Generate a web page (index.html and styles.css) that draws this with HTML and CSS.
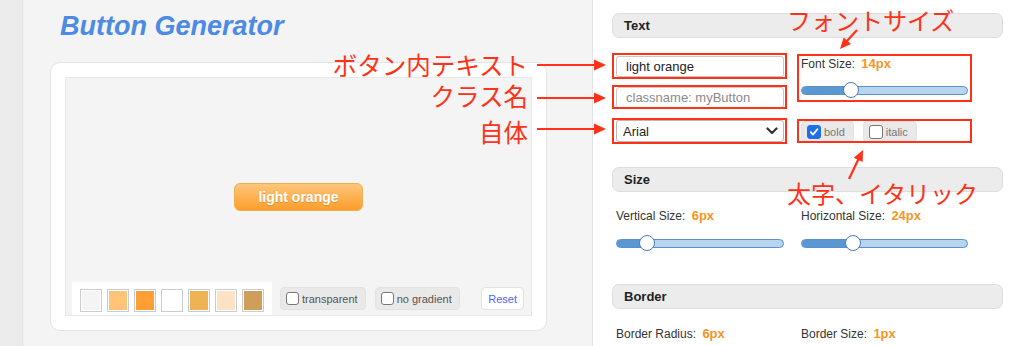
FILE: index.html
```html
<!DOCTYPE html>
<html lang="ja">
<head>
    <meta charset="UTF-8">
    <title>Button Generator</title>
    <link rel="stylesheet" href="styles.css">
</head>
<body>
    <div class="rail"></div>

    <div class="main">
        <h1 class="title">Button Generator</h1>

        <div class="card">
            <div class="canvas">
                <div class="stage">
                    <a class="preview-btn">light orange</a>
                </div>
                <div class="toolbar">
                    <div class="swatches">
                        <span class="swatch" style="background:#f4f4f4"></span>
                        <span class="swatch" style="background:#ffc477"></span>
                        <span class="swatch" style="background:#ff9f36"></span>
                        <span class="swatch" style="background:#ffffff"></span>
                        <span class="swatch" style="background:#efb354"></span>
                        <span class="swatch" style="background:#fde2c6"></span>
                        <span class="swatch" style="background:#cf9f5a"></span>
                    </div>
                    <label class="chip"><span class="box"></span>transparent</label>
                    <label class="chip"><span class="box"></span>no gradient</label>
                    <button class="reset">Reset</button>
                </div>
            </div>
        </div>
    </div>

    <div class="panel">
        <div class="section-head">Text</div>
        <div class="fields text-fields">
            <div class="col">
                <input class="field" type="text" value="light orange">
                <input class="field second" type="text" placeholder="classname: myButton">
                <div class="select-wrap">
                    <select class="field select">
                        <option>Arial</option>
                    </select>
                    <svg class="chevron" width="12" height="8" viewBox="0 0 12 8">
                        <path d="M1.5 1.5L6 6L10.5 1.5" fill="none" stroke="#333" stroke-width="2.2" stroke-linecap="round" stroke-linejoin="round"/>
                    </svg>
                </div>
            </div>
            <div class="col">
                <div class="label">Font Size: <b>14px</b></div>
                <div class="slider">
                    <div class="track"><div class="fill" style="width:30%"></div></div>
                    <span class="thumb" style="left:30%"></span>
                </div>
                <div class="checks">
                    <label class="chip small"><span class="box on">
                        <svg width="10" height="10" viewBox="0 0 10 10"><path d="M1.8 5.2L4 7.6L8.4 2.2" fill="none" stroke="#fff" stroke-width="1.8" stroke-linecap="round" stroke-linejoin="round"/></svg>
                    </span>bold</label>
                    <label class="chip small"><span class="box"></span>italic</label>
                </div>
            </div>
        </div>

        <div class="section-head size-head">Size</div>
        <div class="fields size-fields">
            <div class="col">
                <div class="label">Vertical Size: <b>6px</b></div>
                <div class="slider">
                    <div class="track"><div class="fill" style="width:18.5%"></div></div>
                    <span class="thumb" style="left:18.5%"></span>
                </div>
            </div>
            <div class="col">
                <div class="label">Horizontal Size: <b>24px</b></div>
                <div class="slider">
                    <div class="track"><div class="fill" style="width:31%"></div></div>
                    <span class="thumb" style="left:31%"></span>
                </div>
            </div>
        </div>

        <div class="section-head border-head">Border</div>
        <div class="fields border-fields">
            <div class="col">
                <div class="label">Border Radius: <b>6px</b></div>
            </div>
            <div class="col">
                <div class="label">Border Size: <b>1px</b></div>
            </div>
        </div>
    </div>

    <!-- 注釈 -->
    <div class="notes">
        <span class="note-box" style="left:612px;top:53px;width:175px;height:26px"></span>
        <span class="note-box" style="left:612px;top:85px;width:175px;height:24px"></span>
        <span class="note-box" style="left:612px;top:118px;width:175px;height:26px"></span>
        <span class="note-box" style="left:797px;top:54px;width:175px;height:48px"></span>
        <span class="note-box" style="left:797px;top:119px;width:175px;height:24px"></span>

        <span class="note note-right" style="top:52px">ボタン内テキスト</span>
        <span class="note note-right" style="top:83px">クラス名</span>
        <span class="note note-right" style="top:119px">自体</span>
        <span class="note" style="left:787px;top:7px">フォントサイズ</span>
        <span class="note" style="left:787px;top:180px">太字、イタリック</span>

        <svg class="arrows" width="1024" height="346" viewBox="0 0 1024 346">
            <g stroke="#ff3219" stroke-width="2.2" fill="#ff3219">
                <line x1="537" y1="65" x2="596" y2="65"/>
                <polygon points="594,59.5 606,65 594,70.5" stroke="none"/>
                <line x1="537" y1="98" x2="596" y2="98"/>
                <polygon points="594,92.5 606,98 594,103.5" stroke="none"/>
                <line x1="537" y1="129" x2="596" y2="129"/>
                <polygon points="594,123.5 606,129 594,134.5" stroke="none"/>
                <line x1="857" y1="30" x2="846" y2="42"/>
                <polygon points="840,49 851,44.1 843.6,37.5" stroke="none"/>
                <line x1="849" y1="179" x2="859" y2="158"/>
                <polygon points="863,150 862.7,162.1 853.7,157.7" stroke="none"/>
            </g>
        </svg>
    </div>
</body>
</html>
```

FILE: styles.css
```css
* {
    box-sizing: border-box;
    margin: 0;
    padding: 0;
}

body {
    width: 1024px;
    height: 346px;
    display: flex;
    overflow: hidden;
    position: relative;
    font-family: "Liberation Sans", Arial, sans-serif;
    background-color: #f4f4f4;
    color: #333;
}

/* 左端の帯 */
.rail {
    width: 23px;
    flex-shrink: 0;
    background-color: #ececec;
    border-right: 1px solid #e2e2e2;
}

/* プレビュー側 */
.main {
    width: 569px;
    flex-shrink: 0;
    padding: 11px 0 0 27px;
}

.title {
    padding-left: 10px;
    font-size: 27px;
    line-height: 31px;
    font-weight: bold;
    font-style: italic;
    color: #4d8ae4;
}

.card {
    margin-top: 20px;
    width: 497px;
    height: 269px;
    padding: 14px;
    background-color: #fff;
    border: 1px solid #e4e4e4;
    border-radius: 10px;
}

.canvas {
    height: 100%;
    display: flex;
    flex-direction: column;
    background-color: #f4f4f4;
    border: 1px solid #e8e8e8;
}

.stage {
    flex-grow: 1;
    display: flex;
    justify-content: center;
    align-items: center;
    padding-top: 33px;
}

.preview-btn {
    display: inline-block;
    width: 129px;
    height: 28px;
    line-height: 26px;
    text-align: center;
    font-size: 14px;
    font-weight: bold;
    color: #fff;
    text-shadow: 0 1px 0 #e0903a;
    background: linear-gradient(#ffc67c, #fb9e2a);
    border: 1px solid #f0b050;
    border-radius: 6px;
}

/* 下のツールバー */
.toolbar {
    height: 33px;
    display: flex;
    align-items: center;
    gap: 9px;
    padding: 0 7px 0 6px;
}

.swatches {
    align-self: stretch;
    flex-shrink: 0;
    display: flex;
    align-items: center;
    gap: 5px;
    padding: 3px 8px 0 8px;
    background-color: #fff;
    margin-right: -1px;
}

.swatch {
    width: 22px;
    height: 23px;
    border: 1px solid #c9ccd3;
    box-shadow: inset 0 0 0 1px #fff;
}

.chip {
    height: 23px;
    flex-shrink: 0;
    display: flex;
    align-items: center;
    gap: 3px;
    padding: 0 7px 0 5px;
    font-size: 11px;
    color: #555;
    white-space: nowrap;
    background-color: #e9e9e9;
    border: 1px solid #e2e2e2;
    border-radius: 4px;
}

.box {
    width: 13px;
    height: 13px;
    flex-shrink: 0;
    display: flex;
    align-items: center;
    justify-content: center;
    background-color: #fff;
    border: 1px solid #777;
    border-radius: 3px;
}

.box.on {
    background-color: #1f6fe8;
    border-color: #1f6fe8;
}

.reset {
    margin-left: auto;
    height: 23px;
    padding: 0 6px;
    font-family: inherit;
    font-size: 11px;
    color: #4a68f0;
    background-color: #fff;
    border: 1px solid #e2e2e2;
    border-radius: 4px;
}

/* 設定パネル */
.panel {
    flex-grow: 1;
    padding: 13px 21px 0 19px;
    background-color: #fff;
    border-left: 1px solid #e3e3e3;
}

.section-head {
    height: 25px;
    padding-left: 11px;
    line-height: 23px;
    font-size: 13px;
    font-weight: bold;
    color: #222;
    background-color: #ececec;
    border: 1px solid #dedede;
    border-radius: 7px;
}

.fields {
    display: grid;
    grid-template-columns: 168px 167px;
    column-gap: 17px;
    padding-left: 4px;
}

.col {
    display: flex;
    flex-direction: column;
}

.text-fields {
    margin-top: 18px;
}

.field {
    width: 168px;
    height: 21px;
    padding: 0 9px;
    font-family: inherit;
    font-size: 13px;
    color: #222;
    background-color: #fff;
    border: 1px solid #c8c8c8;
    border-radius: 3px;
    outline: none;
}

.field::placeholder {
    color: #8a8a8a;
}

.field.second {
    margin-top: 10px;
}

.select-wrap {
    position: relative;
    margin-top: 12px;
}

.select {
    height: 22px;
    padding: 0 6px;
    appearance: none;
    -webkit-appearance: none;
    border-color: #b8b8b8;
}

.chevron {
    position: absolute;
    right: 6px;
    top: 7px;
}

.label {
    height: 16px;
    line-height: 16px;
    font-size: 12px;
    color: #333;
}

.label b {
    margin-left: 3px;
    font-size: 13px;
    color: #f7941e;
}

.slider {
    position: relative;
    height: 14px;
    margin-top: 12px;
    display: flex;
    align-items: center;
}

.text-fields .slider {
    margin-top: 11px;
}

.track {
    width: 100%;
    height: 9px;
    overflow: hidden;
    background-color: #b8d5ef;
    border: 1px solid #5b90ca;
    border-radius: 5px;
}

.fill {
    height: 100%;
    background-color: #5b97d0;
}

.thumb {
    position: absolute;
    top: -1px;
    width: 16px;
    height: 16px;
    margin-left: -8px;
    background-color: #fff;
    border: 1.5px solid #4a7cbd;
    border-radius: 50%;
}

.checks {
    display: flex;
    gap: 9px;
    margin-top: 24px;
}

.chip.small {
    height: 21px;
    padding: 0 8px 0 5px;
    color: #777;
}

.chip.small .box {
    width: 14px;
    height: 14px;
}

.size-head {
    margin-top: 25px;
}

.size-fields {
    margin-top: 16px;
}

.border-head {
    margin-top: 34px;
}

.border-fields {
    margin-top: 17px;
}

/* 注釈レイヤー */
.notes {
    position: absolute;
    top: 0;
    left: 0;
    width: 1024px;
    height: 346px;
    pointer-events: none;
}

.note-box {
    position: absolute;
    border: 2px solid #ff3219;
}

.note {
    position: absolute;
    font-family: "Noto Sans CJK JP", sans-serif;
    font-size: 24px;
    line-height: 26px;
    color: #ff3219;
    white-space: nowrap;
}

.note-right {
    right: 496px;
    font-size: 24.5px;
}

.arrows {
    position: absolute;
    top: 0;
    left: 0;
}
```
